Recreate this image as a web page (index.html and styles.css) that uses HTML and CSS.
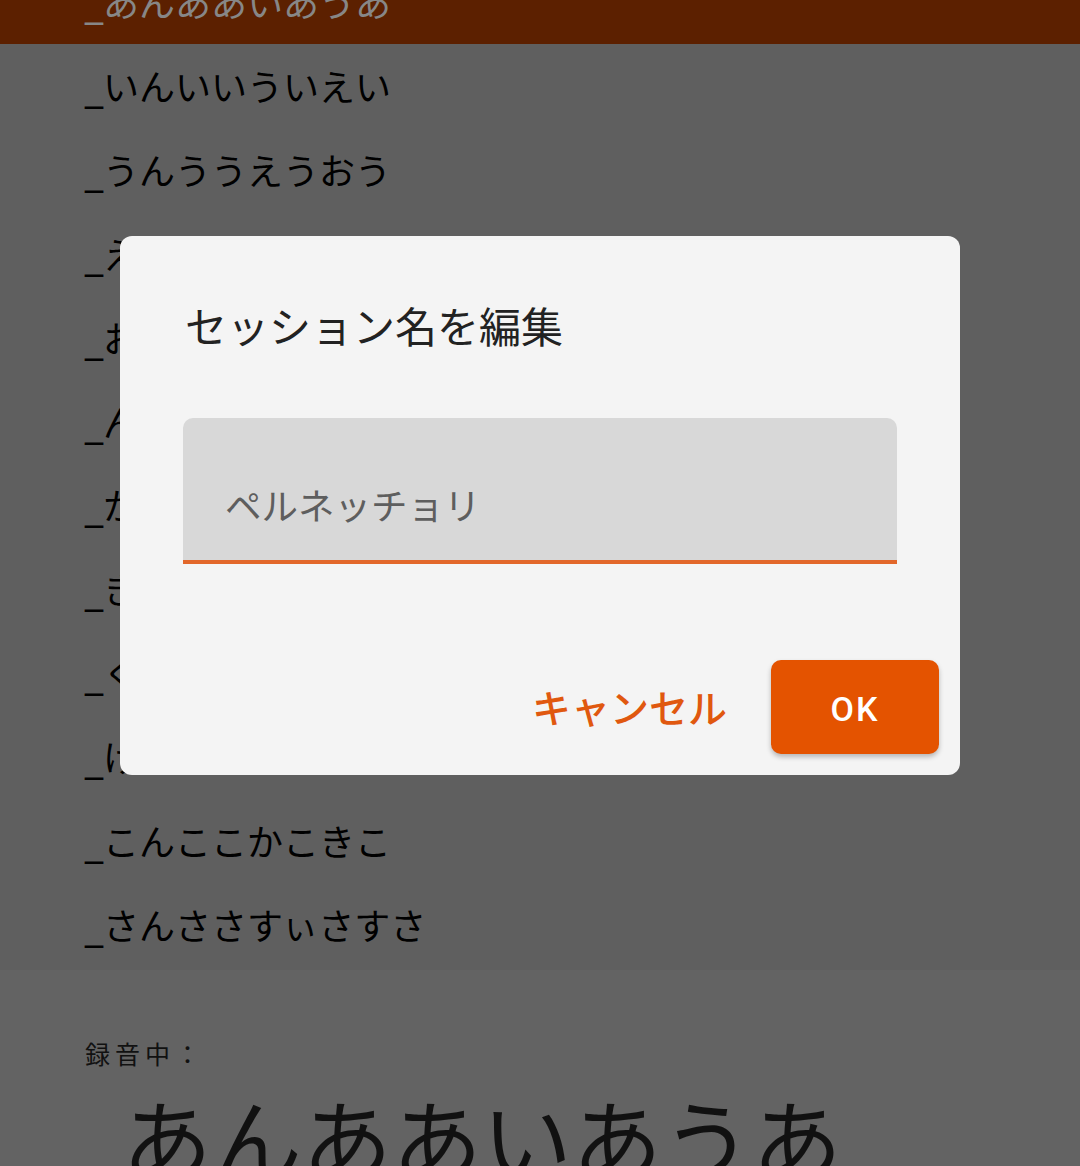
FILE: index.html
```html
<!DOCTYPE html>
<html lang="ja">
<head>
<meta charset="utf-8">
<title>セッション名を編集</title>
<link rel="stylesheet" href="styles.css">
</head>
<body>
<div class="page">
  <ul class="list">
    <li class="row selected">_あんああいあうあ</li>
    <li class="row">_いんいいういえい</li>
    <li class="row">_うんううえうおう</li>
    <li class="row">_えんええおえかえ</li>
    <li class="row">_おんおおかおきお</li>
    <li class="row">_んんんんあんいん</li>
    <li class="row">_かんかかきかくか</li>
    <li class="row">_きんききくきけき</li>
    <li class="row">_くんくくけくこく</li>
    <li class="row">_けんけけこけさけ</li>
    <li class="row">_こんここかこきこ</li>
    <li class="row">_さんささすぃさすさ</li>
  </ul>
  <section class="recording">
    <div class="rec-label">録音中：</div>
    <div class="rec-name">_あんああいあうあ</div>
  </section>
</div>

<div class="dialog" role="dialog">
  <h2 class="dialog-title">セッション名を編集</h2>
  <div class="field">
    <span class="field-text">ペルネッチョリ</span>
  </div>
  <div class="actions">
    <button class="btn-text">キャンセル</button>
    <button class="btn-ok">OK</button>
  </div>
</div>
</body>
</html>
```
FILE: styles.css
```css
* { box-sizing: border-box; }

html, body {
  margin: 0;
  padding: 0;
  background: #606060;
  font-family: "Noto Sans CJK JP", "Noto Sans", sans-serif;
}

.page {
  width: 1080px;
  height: 1166px;
  overflow: hidden;
  background: #606060;
}

.list {
  list-style: none;
  margin: -39.9px 0 0 0;
  padding: 0 0 3px 0;
  background: #5f5f5f;
}

.row {
  height: 83.9px;
  display: flex;
  align-items: center;
  padding: 6px 0 0 85px;
  font-family: "DejaVu Sans", "Noto Sans CJK JP", sans-serif;
  font-size: 36px;
  line-height: 1;
  color: #000;
  white-space: nowrap;
}

.row.selected {
  background: #5c2000;
  color: #878787;
}

.recording {
  background: #636363;
  padding: 65px 0 0 85px;
  height: 200px;
}

.rec-label {
  font-size: 25px;
  line-height: 36px;
  letter-spacing: 5px;
  color: #111;
}

.rec-name {
  margin: 18px 0 0 -8px;
  font-family: "DejaVu Sans", "Noto Sans CJK JP", sans-serif;
  font-size: 90px;
  line-height: 110px;
  color: #111;
  white-space: nowrap;
}

.dialog {
  position: fixed;
  left: 120px;
  top: 236px;
  width: 840px;
  height: 539px;
  background: #f4f4f4;
  border-radius: 12px;
  padding: 61px 63px 21px 63px;
  display: flex;
  flex-direction: column;
}

.dialog-title {
  margin: 0 0 0 2px;
  font-size: 42px;
  line-height: 56px;
  font-weight: 400;
  color: #222;
}

.field {
  margin-top: 65px;
  height: 146px;
  background: #d8d8d8;
  border-radius: 10px 10px 0 0;
  border-bottom: 4px solid #e2672a;
  padding: 62px 0 0 42px;
}

.field-text {
  font-size: 36.5px;
  line-height: 50px;
  color: #5e5e5e;
}

.actions {
  margin-top: auto;
  margin-right: -42px;
  display: flex;
  justify-content: flex-end;
  align-items: center;
  gap: 44px;
}

.btn-text {
  border: 0;
  background: none;
  padding: 0 0 2px 0;
  font-family: "Noto Sans CJK JP", sans-serif;
  font-size: 39px;
  line-height: 50px;
  font-weight: 500;
  color: #e0580f;
}

.btn-ok {
  width: 168px;
  height: 94px;
  border: 0;
  border-radius: 10px;
  background: #e45300;
  color: #fff;
  font-family: Roboto, "Noto Sans", sans-serif;
  font-weight: 500;
  font-size: 34px;
  letter-spacing: 2px;
  padding-top: 4px;
  box-shadow: 0 3px 5px rgba(0, 0, 0, 0.25);
}
```
